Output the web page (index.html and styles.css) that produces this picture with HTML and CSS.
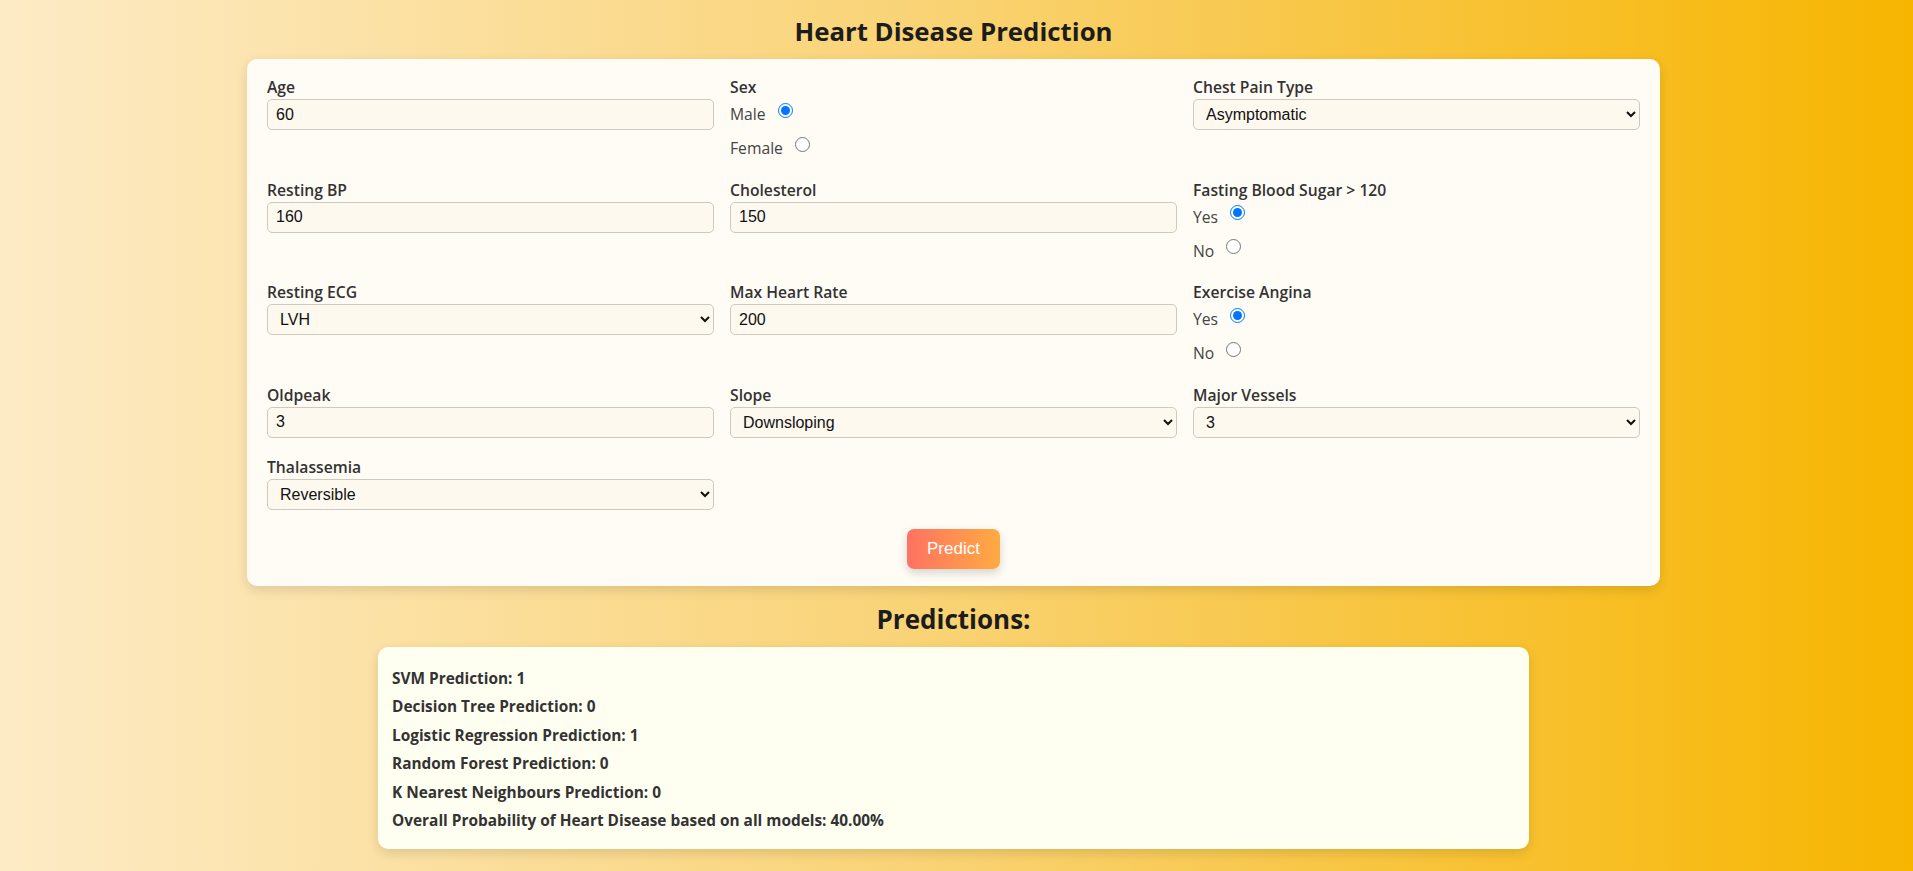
FILE: index.html
```html
<!DOCTYPE html>
<html lang="en">
<head>
<meta charset="utf-8">
<title>Heart Disease Prediction</title>
<link rel="stylesheet" href="styles.css">
</head>
<body>
  <h1 class="title">Heart Disease Prediction</h1>
  <form class="card">
    <div class="form-grid">
      <div class="field">
        <label class="lbl">Age</label>
        <input class="ctl" type="text" value="60">
      </div>
      <div class="field">
        <label class="lbl">Sex</label>
        <div class="opts">
          <div class="opt"><span>Male</span><input class="radio" type="radio" name="sex" checked></div>
          <div class="opt"><span>Female</span><input class="radio" type="radio" name="sex"></div>
        </div>
      </div>
      <div class="field">
        <label class="lbl">Chest Pain Type</label>
        <select class="ctl"><option>Asymptomatic</option></select>
      </div>

      <div class="field">
        <label class="lbl">Resting BP</label>
        <input class="ctl" type="text" value="160">
      </div>
      <div class="field">
        <label class="lbl">Cholesterol</label>
        <input class="ctl" type="text" value="150">
      </div>
      <div class="field">
        <label class="lbl">Fasting Blood Sugar &gt; 120</label>
        <div class="opts">
          <div class="opt"><span>Yes</span><input class="radio" type="radio" name="fbs" checked></div>
          <div class="opt"><span>No</span><input class="radio" type="radio" name="fbs"></div>
        </div>
      </div>

      <div class="field">
        <label class="lbl">Resting ECG</label>
        <select class="ctl"><option>LVH</option></select>
      </div>
      <div class="field">
        <label class="lbl">Max Heart Rate</label>
        <input class="ctl" type="text" value="200">
      </div>
      <div class="field">
        <label class="lbl">Exercise Angina</label>
        <div class="opts">
          <div class="opt"><span>Yes</span><input class="radio" type="radio" name="ang" checked></div>
          <div class="opt"><span>No</span><input class="radio" type="radio" name="ang"></div>
        </div>
      </div>

      <div class="field">
        <label class="lbl">Oldpeak</label>
        <input class="ctl" type="text" value="3">
      </div>
      <div class="field">
        <label class="lbl">Slope</label>
        <select class="ctl"><option>Downsloping</option></select>
      </div>
      <div class="field">
        <label class="lbl">Major Vessels</label>
        <select class="ctl"><option>3</option></select>
      </div>

      <div class="field">
        <label class="lbl">Thalassemia</label>
        <select class="ctl"><option>Reversible</option></select>
      </div>
    </div>
    <div class="actions">
      <button class="btn" type="button">Predict</button>
    </div>
  </form>

  <h2 class="subtitle">Predictions:</h2>
  <div class="results">
    <p class="res">SVM Prediction: 1</p>
    <p class="res">Decision Tree Prediction: 0</p>
    <p class="res">Logistic Regression Prediction: 1</p>
    <p class="res">Random Forest Prediction: 0</p>
    <p class="res">K Nearest Neighbours Prediction: 0</p>
    <p class="res">Overall Probability of Heart Disease based on all models: 40.00%</p>
  </div>
</body>
</html>
```
FILE: styles.css
```css
* { box-sizing: border-box; }

html { height: 100%; }

body {
  margin: 0;
  min-height: 100%;
  padding: 1px 6px 24px 0;
  font-family: "Segoe UI", "Open Sans", "Noto Sans", sans-serif;
  color: #333;
  background: linear-gradient(to right, #fdebc6 0%, #f9d272 50%, #f7b500 100%);
}

.title {
  margin: 13px 0 11px;
  text-align: center;
  font-size: 25.8px;
  line-height: 34px;
  font-weight: 700;
  color: #1c1c1c;
}

.card {
  width: 1413px;
  margin: 0 auto;
  padding: 18px 20px 17px;
  background: #fffcf5;
  border-radius: 10px;
  box-shadow: 0 4px 12px rgba(0, 0, 0, 0.12);
}

.form-grid {
  display: grid;
  grid-template-columns: repeat(3, 1fr);
  column-gap: 16px;
  row-gap: 19.5px;
}

.field {
  display: flex;
  flex-direction: column;
}

.lbl {
  font-size: 15.7px;
  line-height: 20px;
  font-weight: 600;
  color: #333;
  margin-bottom: 2px;
}

.ctl {
  width: 100%;
  height: 31px;
  padding: 0 8px;
  border: 1px solid #cfcac0;
  border-radius: 5px;
  background: #fdf9ef;
  font-family: "Liberation Sans", Arial, sans-serif;
  font-size: 16px;
  color: #111;
}

select.ctl { padding: 0 8px; }

.opts {
  display: flex;
  flex-direction: column;
  gap: 10px;
  margin-top: 3px;
}

.opt {
  display: flex;
  align-items: center;
  height: 24px;
  font-size: 15.7px;
  color: #444;
}

.radio {
  width: 15px;
  height: 15px;
  margin: 0 0 8px 12px;
}

.actions {
  display: flex;
  justify-content: center;
  margin-top: 19px;
}

.btn {
  padding: 10px 20px;
  border: none;
  border-radius: 7px;
  background: linear-gradient(to right, #ff7262, #ffab42);
  color: #fff;
  font-family: "Liberation Sans", Arial, sans-serif;
  font-size: 17px;
  line-height: 20px;
  box-shadow: 0 4px 10px rgba(0, 0, 0, 0.16);
}

.subtitle {
  margin: 18px 0 12px;
  text-align: center;
  font-size: 26px;
  line-height: 31px;
  font-weight: 700;
  color: #1c1c1c;
}

.results {
  width: 1151px;
  margin: 0 auto;
  padding: 22px 14px 18px;
  background: #fffff1;
  border-radius: 10px;
  box-shadow: 0 4px 12px rgba(0, 0, 0, 0.12);
  display: flex;
  flex-direction: column;
  gap: 8px;
}

.res {
  margin: 0;
  font-size: 15.4px;
  line-height: 20.4px;
  font-weight: 700;
  color: #333;
}
```
